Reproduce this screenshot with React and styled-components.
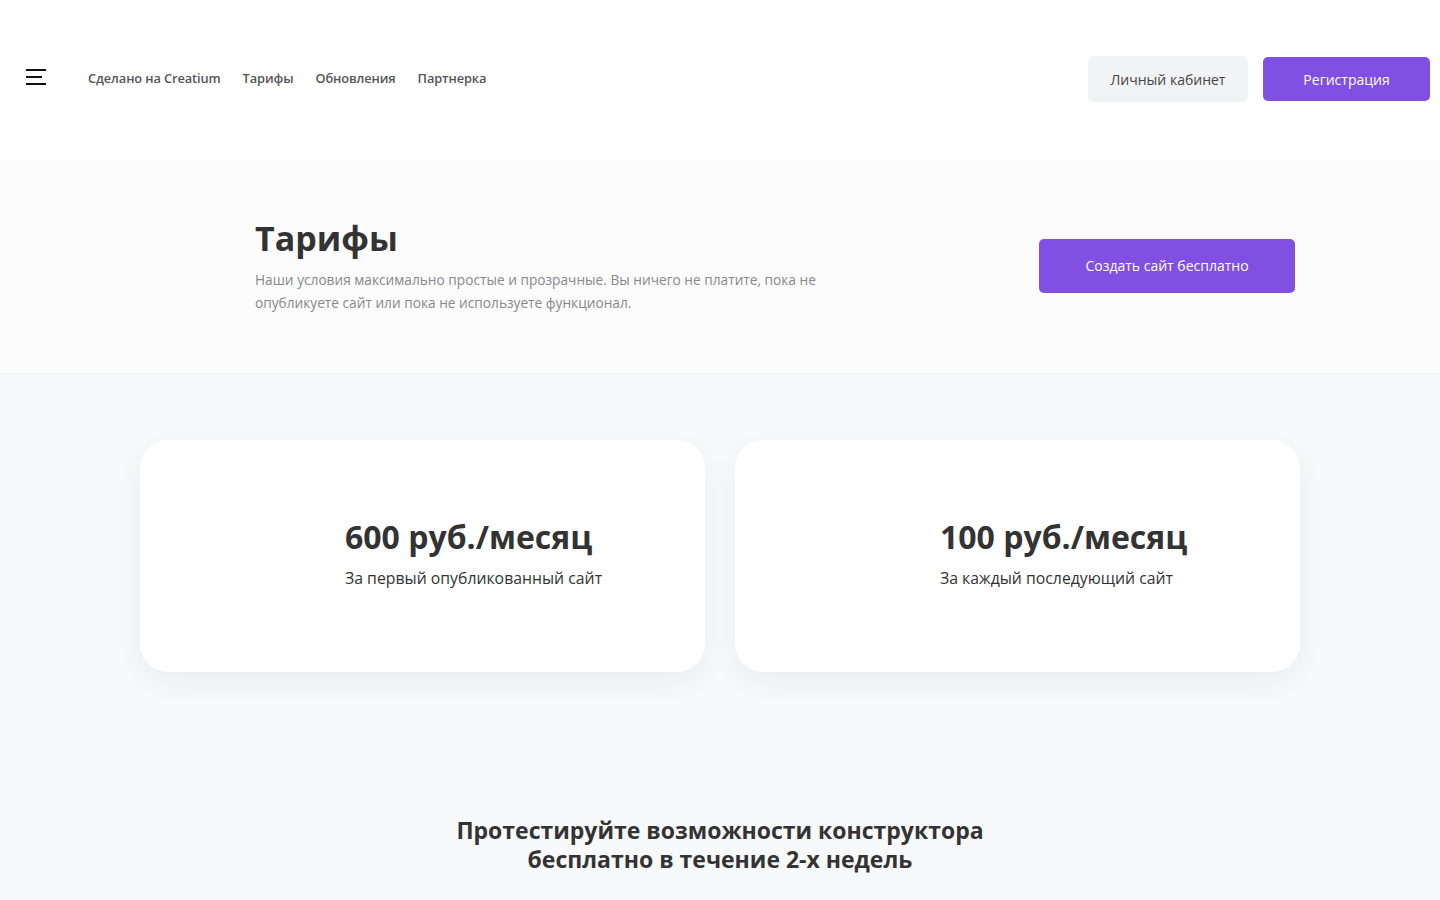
import React from "react";
import styled, { createGlobalStyle } from "styled-components";

const Global = createGlobalStyle`
  html, body { margin: 0; padding: 0; }
  body {
    font-family: "Open Sans", "Noto Sans", sans-serif;
    color: #333;
    background: #f8f9fb;
    -webkit-font-smoothing: antialiased;
  }
  * { box-sizing: border-box; }
`;

const Header = styled.header`
  height: 160px;
  background: #fff;
  display: flex;
  align-items: center;
  padding: 0 10px 2px 26px;
`;

const Burger = styled.button`
  width: 20px;
  height: 16px;
  padding: 0;
  border: 0;
  background: transparent;
  display: flex;
  flex-direction: column;
  justify-content: space-between;
  cursor: pointer;
  margin-top: -4px;
  span {
    display: block;
    height: 2px;
    background: #111;
  }
  span:nth-child(2) { width: 16px; }
`;

const Nav = styled.nav`
  display: flex;
  gap: 22px;
  margin-left: 42px;
  margin-top: -2px;
`;

const NavLink = styled.a`
  font-size: 12.8px;
  font-weight: 600;
  color: #555;
  text-decoration: none;
  letter-spacing: -0.1px;
`;

const HeaderActions = styled.div`
  margin-left: auto;
  display: flex;
  align-items: center;
  gap: 15px;
`;

const Button = styled.a`
  display: inline-flex;
  align-items: center;
  justify-content: center;
  border-radius: 5px;
  font-size: 14px;
  text-decoration: none;
  width: ${(p) => p.$w}px;
  height: ${(p) => p.$h}px;
  background: ${(p) => (p.$primary ? "#8150e2" : "#f2f3f5")};
  color: ${(p) => (p.$primary ? "#fff" : "#444")};
`;

const Hero = styled.section`
  background: #fcfcfd;
  border-bottom: 1px solid #eceef1;
  height: 214px;
  display: flex;
  align-items: center;
  padding: 0 145px 2px 255px;
`;

const HeroText = styled.div`
  flex: 1;
`;

const Title = styled.h1`
  margin: 0 0 10px;
  font-size: 34px;
  font-weight: 700;
  color: #333;
  line-height: 40px;
`;

const Lead = styled.p`
  margin: 0;
  max-width: 580px;
  font-size: 13.7px;
  line-height: 23px;
  color: #888;
`;

const Pricing = styled.section`
  background: #f8f9fb;
  padding: 66px 140px 0;
  display: grid;
  grid-template-columns: 1fr 1fr;
  gap: 30px;
`;

const Card = styled.div`
  height: 232px;
  background: #fff;
  border-radius: 28px;
  box-shadow: 0 10px 30px rgba(30, 40, 70, 0.06);
  display: flex;
  flex-direction: column;
  justify-content: center;
  padding: 0 0 6px 205px;
`;

const Price = styled.div`
  font-size: 32px;
  font-weight: 700;
  color: #333;
  line-height: 40px;
`;

const PriceNote = styled.div`
  margin-top: 10px;
  font-size: 15.8px;
  color: #333;
`;

const Cta = styled.section`
  background: #f8f9fb;
  padding: 144px 0 26px;
  text-align: center;
`;

const CtaTitle = styled.h2`
  margin: 0;
  font-size: 23px;
  line-height: 29px;
  font-weight: 700;
  color: #333;
`;

export default function App() {
  return (
    <>
      <Global />
      <Header>
        <Burger aria-label="Меню">
          <span />
          <span />
          <span />
        </Burger>
        <Nav>
          <NavLink href="#">Сделано на Creatium</NavLink>
          <NavLink href="#">Тарифы</NavLink>
          <NavLink href="#">Обновления</NavLink>
          <NavLink href="#">Партнерка</NavLink>
        </Nav>
        <HeaderActions>
          <Button href="#" $w={160} $h={46}>Личный кабинет</Button>
          <Button href="#" $primary $w={167} $h={44}>Регистрация</Button>
        </HeaderActions>
      </Header>
      <Hero>
        <HeroText>
          <Title>Тарифы</Title>
          <Lead>
            Наши условия максимально простые и прозрачные. Вы ничего не платите, пока не
            опубликуете сайт или пока не используете функционал.
          </Lead>
        </HeroText>
        <Button href="#" $primary $w={256} $h={54}>Создать сайт бесплатно</Button>
      </Hero>
      <Pricing>
        <Card>
          <Price>600 руб./месяц</Price>
          <PriceNote>За первый опубликованный сайт</PriceNote>
        </Card>
        <Card>
          <Price>100 руб./месяц</Price>
          <PriceNote>За каждый последующий сайт</PriceNote>
        </Card>
      </Pricing>
      <Cta>
        <CtaTitle>
          Протестируйте возможности конструктора
          <br />
          бесплатно в течение 2-х недель
        </CtaTitle>
      </Cta>
    </>
  );
}
